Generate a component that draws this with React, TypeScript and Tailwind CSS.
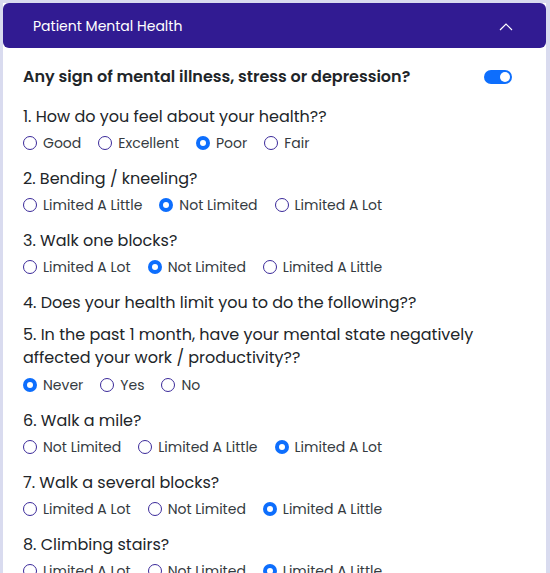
import React from "react";

type Q = { text: React.ReactNode; options?: string[]; checked?: number; twoLine?: boolean };

const questions: Q[] = [
  { text: "1. How do you feel about your health??", options: ["Good", "Excellent", "Poor", "Fair"], checked: 2 },
  { text: "2. Bending / kneeling?", options: ["Limited A Little", "Not Limited", "Limited A Lot"], checked: 1 },
  { text: "3. Walk one blocks?", options: ["Limited A Lot", "Not Limited", "Limited A Little"], checked: 1 },
  { text: "4. Does your health limit you to do the following??" },
  {
    text: (
      <>
        5. In the past 1 month, have your mental state negatively
        <br />
        affected your work / productivity??
      </>
    ),
    options: ["Never", "Yes", "No"],
    checked: 0,
    twoLine: true,
  },
  { text: "6. Walk a mile?", options: ["Not Limited", "Limited A Little", "Limited A Lot"], checked: 2 },
  { text: "7. Walk a several blocks?", options: ["Limited A Lot", "Not Limited", "Limited A Little"], checked: 2 },
  { text: "8. Climbing stairs?", options: ["Limited A Lot", "Not Limited", "Limited A Little"], checked: 2 },
];

function Radio({ checked }: { checked: boolean }) {
  return checked ? (
    <span className="flex h-[14px] w-[14px] shrink-0 items-center justify-center rounded-full bg-[#0d6efd]">
      <span className="h-[6px] w-[6px] rounded-full bg-white" />
    </span>
  ) : (
    <span className="h-[14px] w-[14px] shrink-0 rounded-full border-[1.5px] border-[#3b2a9a] bg-white" />
  );
}

export default function App() {
  return (
    <div
      className="min-h-screen bg-[#d9dbef] pl-[3px] pr-[4px] pt-[3px]"
      style={{ fontFamily: "Poppins, Inter, 'Noto Sans', sans-serif" }}
    >
      <div className="bg-white">
        <div className="flex h-[45px] items-center justify-between rounded-[6px] bg-[#311b92] pl-[30px] pr-[33px] pt-[2px]">
          <span className="text-[14px] text-white">Patient Mental Health</span>
          <svg width="14" height="8" viewBox="0 0 14 8" fill="none">
            <polyline points="1,7 7,1 13,7" stroke="white" strokeWidth="1.2" />
          </svg>
        </div>
        <div className="pl-[20px] pr-[34px] pt-[17px] pb-4">
          <div className="flex h-[24px] items-center justify-between">
            <span className="text-[16px] font-semibold text-[#212529]">
              Any sign of mental illness, stress or depression?
            </span>
            <span className="flex h-[14px] w-[28px] items-center justify-end rounded-full bg-[#0d6efd] pr-[2px]">
              <span className="h-[10px] w-[10px] rounded-full bg-white" />
            </span>
          </div>
          <div className="mt-[16px] flex flex-col">
            {questions.map((q, i) => (
              <div key={i} className={q.options ? "mb-[14px]" : "mb-[8px]"}>
                <div className={`text-[16px] text-[#212529] ${q.twoLine ? "leading-[23px]" : "leading-[24px]"}`}>
                  {q.text}
                </div>
                {q.options && (
                  <div className={`flex h-5 items-center gap-[17px] ${q.twoLine ? "mt-[6px]" : "mt-[4px]"}`}>
                    {q.options.map((o, j) => (
                      <label key={j} className="flex items-center gap-[6px]">
                        <Radio checked={j === q.checked} />
                        <span className="text-[14px] text-[#343a40]">{o}</span>
                      </label>
                    ))}
                  </div>
                )}
              </div>
            ))}
          </div>
        </div>
      </div>
    </div>
  );
}
